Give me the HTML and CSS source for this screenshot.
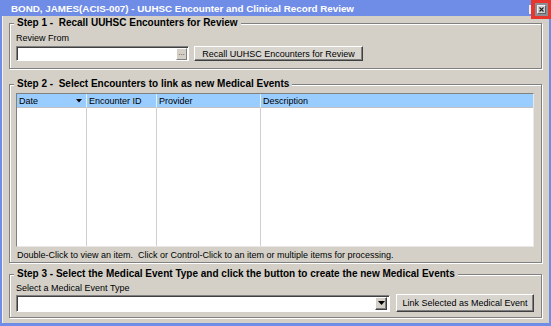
FILE: index.html
```html
<html>
  <head>
    <title>UUHSC Encounter and Clinical Record Review</title>
    <link rel="stylesheet" href="styles.css">
  </head>
  <body>
    <div class="window">
      <div class="titlebar">
        <span class="title">BOND, JAMES(ACIS-007) - UUHSC Encounter and Clinical Record Review</span>
        <span class="max-sliver"></span>
        <span class="close-box">
          <span class="close-btn">
            <svg width="5" height="5" viewBox="0 0 5 5">
              <path d="M0.5 0.5 L4.5 4.5 M4.5 0.5 L0.5 4.5" stroke="#202020" stroke-width="1.1" />
            </svg>
          </span>
        </span>
      </div>

      <div class="content">
        <fieldset class="group step1">
          <legend>Step 1 -&nbsp; Recall UUHSC Encounters for Review</legend>
          <div class="field-label">Review From</div>
          <div class="row">
            <div class="text-input review-from">
              <span class="browse">...</span>
            </div>
            <button class="btn recall">Recall UUHSC Encounters for Review</button>
          </div>
        </fieldset>

        <fieldset class="group step2">
          <legend>Step 2 -&nbsp; Select Encounters to link as new Medical Events</legend>
          <div class="grid">
            <div class="head">Date
              <svg class="sort" width="6" height="4" viewBox="0 0 6 4">
                <path d="M0 0 H6 L3 3.5 Z" fill="#000" />
              </svg>
            </div>
            <div class="head">Encounter ID</div>
            <div class="head">Provider</div>
            <div class="head last">Description</div>
            <div class="cell"></div>
            <div class="cell"></div>
            <div class="cell"></div>
            <div class="cell last"></div>
          </div>
          <div class="hint">Double-Click to view an item.&nbsp; Click or Control-Click to an item or multiple items for processing.</div>
        </fieldset>

        <fieldset class="group step3">
          <legend>Step 3 - Select the Medical Event Type and click the button to create the new Medical Events</legend>
          <div class="field-label">Select a Medical Event Type</div>
          <div class="row">
            <div class="text-input event-type">
              <span class="drop">
                <svg width="7" height="4" viewBox="0 0 7 4">
                  <path d="M0 0 H7 L3.5 4 Z" fill="#000" />
                </svg>
              </span>
            </div>
            <button class="btn link">Link Selected as Medical Event</button>
          </div>
        </fieldset>
      </div>
    </div>
  </body>
</html>
```

FILE: styles.css
```css
body {
  margin: 0px;
  font-family: "Liberation Sans", Arial, sans-serif;
  font-size: 9px;
  color: #000;
}

.window {
  position: relative;
  width: 551px;
  height: 326px;
  background: #6f8ce6;
  display: flex;
  flex-direction: column;
  overflow: hidden;
}

.titlebar {
  height: 16px;
  flex: none;
  display: flex;
  align-items: center;
  padding-left: 11px;
  color: #fff;
  font-size: 9.8px;
  font-weight: bold;
}

.max-sliver {
  position: absolute;
  left: 529px;
  top: 5px;
  width: 2px;
  height: 9px;
  background: #eef0f6;
}

.close-box {
  position: absolute;
  top: 0px;
  right: 0px;
  width: 20px;
  height: 19px;
  box-sizing: border-box;
  border: 3px solid #e8362c;
  border-left-width: 4px;
  background: #8c8c94;
  display: flex;
  align-items: center;
  justify-content: center;
}

.close-btn {
  width: 9px;
  height: 9px;
  box-sizing: border-box;
  background: #cfcfcf;
  border: 1px solid;
  border-color: #f0f0f0 #606060 #606060 #f0f0f0;
  display: flex;
  align-items: center;
  justify-content: center;
}

.content {
  flex: 1;
  margin: 0px 2px 3px 2px;
  background: #d4d0c8;
  border-left: 1px solid #f2f1ed;
  padding: 1px 7px 0px 6px;
}

.group {
  margin: 0px;
  padding: 4px 7px 7px 6px;
  border: 1px solid #808080;
  box-shadow: inset 1px 1px 0 #fff, 1px 1px 0 #fff;
  min-inline-size: 0;
}

.group legend {
  font-size: 10px;
  font-weight: bold;
  line-height: 12px;
  padding: 0px 3px;
  margin-left: -2px;
  background: #d4d0c8;
}

.step2 {
  margin-top: 9px;
  padding-top: 3px;
  padding-bottom: 1px;
}

.step3 {
  margin-top: 5px;
  padding-top: 3px;
  padding-bottom: 5px;
}

.field-label {
  line-height: 10px;
  margin-bottom: 3px;
}

.step3 .field-label {
  margin-bottom: 1px;
}

.row {
  display: flex;
  align-items: center;
}

.text-input {
  box-sizing: border-box;
  background: #fff;
  border: 1px solid;
  border-color: #808080 #fff #fff #808080;
  box-shadow: inset 1px 1px 0 #404040;
  display: flex;
  justify-content: flex-end;
  align-items: center;
  padding-right: 1px;
}

.review-from {
  width: 173px;
  height: 15px;
}

.event-type {
  width: 374px;
  height: 17px;
  padding-right: 2px;
}

.browse {
  box-sizing: border-box;
  width: 11px;
  height: 12px;
  background: #d4d0c8;
  border: 1px solid;
  border-color: #fff #808080 #808080 #fff;
  font-size: 8px;
  line-height: 8px;
  color: #404040;
  text-align: center;
}

.drop {
  box-sizing: border-box;
  width: 12px;
  height: 13px;
  background: #d4d0c8;
  border: 1px solid;
  border-color: #fff #404040 #404040 #fff;
  box-shadow: inset -1px -1px 0 #808080;
  display: flex;
  align-items: center;
  justify-content: center;
}

.btn {
  box-sizing: border-box;
  font-family: "Liberation Sans", Arial, sans-serif;
  font-size: 9px;
  color: #000;
  background: #d8d5cf;
  border: 1px solid;
  border-color: #fff #404040 #404040 #fff;
  box-shadow: inset -1px -1px 0 #808080;
  padding: 0px;
}

.recall {
  width: 169px;
  height: 15px;
  margin-left: 5px;
}

.link {
  width: 138px;
  height: 18px;
  margin-left: 6px;
}

.grid {
  box-sizing: border-box;
  height: 154px;
  background: #fff;
  border: 1px solid;
  border-color: #808080 #e8e8e8 #e8e8e8 #808080;
  display: grid;
  grid-template-columns: 70px 70px 104px 1fr;
  grid-template-rows: 14px 1fr;
}

.head {
  background: #99ccff;
  border-right: 1px solid #e6f0fa;
  border-bottom: 1px solid #c0c0c0;
  line-height: 14px;
  padding-left: 2px;
  display: flex;
  align-items: center;
}

.sort {
  margin-left: auto;
  margin-right: 4px;
}

.cell {
  border-right: 1px solid #cfcfcf;
}

.head.last,
.cell.last {
  border-right: none;
}

.hint {
  margin-top: 3px;
  line-height: 11px;
  padding-left: 1px;
}
```
